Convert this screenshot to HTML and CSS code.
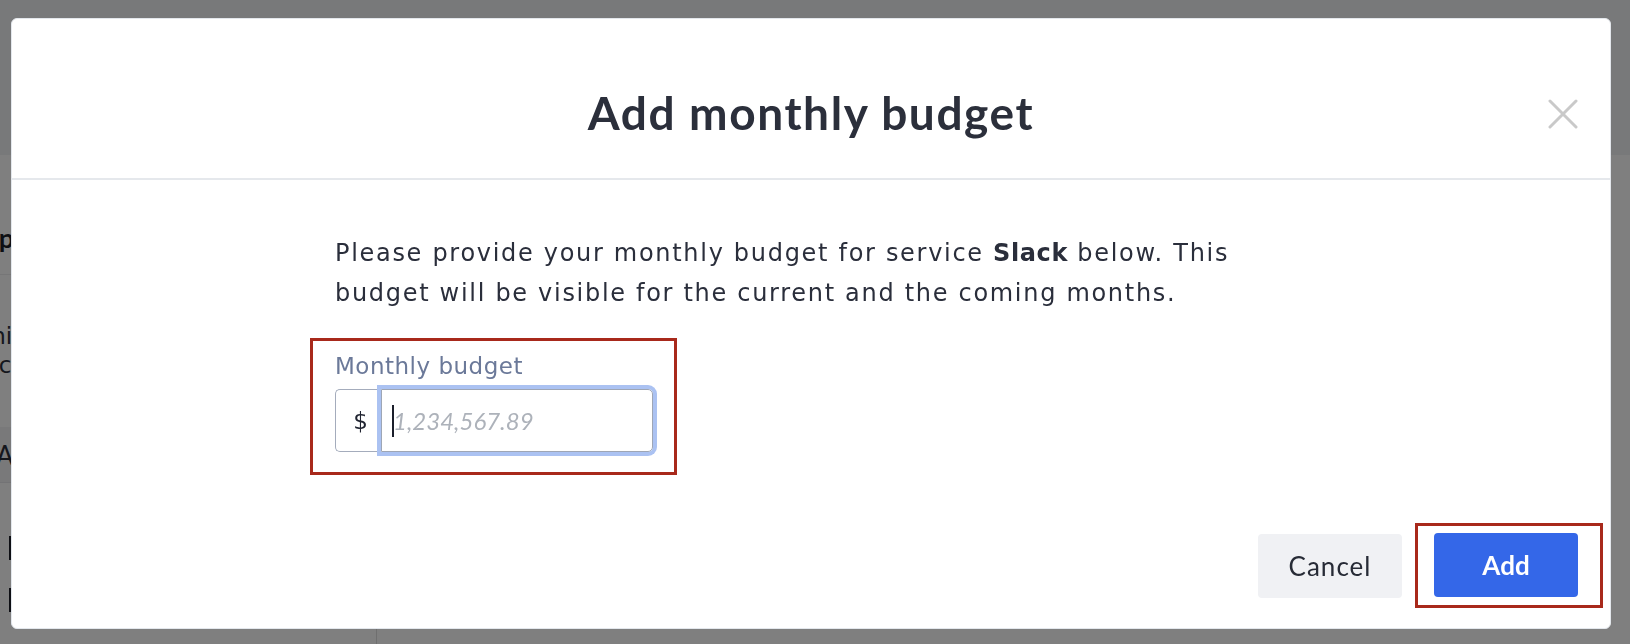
FILE: index.html
```html
<!DOCTYPE html>
<html lang="en">
<head>
<meta charset="utf-8">
<title>Add monthly budget</title>
<link rel="stylesheet" href="styles.css">
</head>
<body>
<div class="app">
  <header class="app-header"></header>
  <div class="app-main">
    <aside class="side">
      <div class="side-head"><span class="side-title">Ap</span></div>
      <div class="side-text">
        <span class="side-line side-line-1">Mini</span>
        <span class="side-line side-line-2">Arc</span>
      </div>
      <div class="side-row">A</div>
      <div class="side-list">
        <span class="side-bar"></span>
        <span class="side-bar"></span>
      </div>
    </aside>
    <main class="content"></main>
  </div>
</div>

<div class="overlay">
  <section class="modal" role="dialog" aria-labelledby="modal-title">
    <header class="modal-header">
      <span class="spacer"></span>
      <h1 class="modal-title" id="modal-title">Add monthly budget</h1>
      <button class="close-btn" type="button" aria-label="Close">
        <svg width="30" height="30" viewBox="0 0 30 30" aria-hidden="true">
          <path d="M2 2 L28 28 M28 2 L2 28" stroke="#c9c9c9" stroke-width="3" stroke-linecap="round" fill="none"/>
        </svg>
      </button>
    </header>
    <div class="modal-body">
      <div class="content-col">
        <p class="lead">Please provide your monthly budget for service <strong>Slack</strong> below. This budget will be visible for the current and the coming months.</p>
        <div class="form-group">
          <label class="field-label" for="budget">Monthly budget</label>
          <div class="input-group">
            <span class="addon">$</span>
            <div class="field" id="budget">
              <span class="caret"></span>
              <span class="placeholder">1,234,567.89</span>
            </div>
          </div>
        </div>
      </div>
    </div>
    <footer class="modal-footer">
      <button class="btn btn-cancel" type="button">Cancel</button>
      <div class="highlight">
        <button class="btn btn-add" type="button">Add</button>
      </div>
    </footer>
  </section>
</div>
</body>
</html>
```

FILE: styles.css
```css
* { box-sizing: border-box; }

html, body {
  margin: 0;
  padding: 0;
}

body {
  width: 1630px;
  height: 644px;
  overflow: hidden;
  font-family: "Lato", "Liberation Sans", sans-serif;
  background: #ffffff;
  color: #2b2f3b;
}

/* underlying application (dimmed) */
.app {
  display: flex;
  flex-direction: column;
  height: 644px;
}

.app-header {
  height: 155px;
  background: #f1f2f5;
  flex: none;
}

.app-main {
  flex: 1;
  display: flex;
}

.side {
  width: 377px;
  border-right: 1px solid #dedede;
  display: flex;
  flex-direction: column;
}

.side-head {
  height: 120px;
  padding-top: 68px;
  border-bottom: 1px solid #ececee;
}

.side-title {
  display: block;
  margin-left: -20px;
  font-size: 27px;
  font-weight: 700;
  line-height: 30px;
  color: #1c1f29;
}

.side-text {
  padding-top: 47px;
  font-family: "DejaVu Sans", sans-serif;
  font-size: 23px;
  line-height: 29px;
  color: #2b2f3b;
  height: 152px;
  display: flex;
  flex-direction: column;
}

.side-line-1 { margin-left: -35px; }
.side-line-2 { margin-left: -26px; }

.side-row {
  height: 56px;
  background: #f2f3f5;
  margin-left: -4px;
  font-size: 26px;
  line-height: 56px;
  color: #2b2f3b;
  border-bottom: 1px solid #e6e7ea;
  margin-bottom: 39px;
}

.side-list {
  display: flex;
  flex-direction: column;
  gap: 28px;
  padding-top: 14px;
  padding-left: 9px;
}

.side-bar {
  display: block;
  width: 3px;
  height: 24px;
  background: #1c1f29;
}

.content {
  flex: 1;
}

/* overlay + modal */
.overlay {
  position: fixed;
  inset: 0;
  background: rgba(0, 0, 0, 0.5);
  display: flex;
  padding: 18px 19px 15px 11px;
}

.modal {
  flex: 1;
  background: #ffffff;
  border: 1px solid #e3e7ec;
  border-radius: 6px;
  display: flex;
  flex-direction: column;
  overflow: hidden;
}

.modal-header {
  display: grid;
  grid-template-columns: 1fr auto 1fr;
  align-items: center;
  padding: 71px 0 42px;
  border-bottom: 2px solid #e5e8ec;
}

.modal-title {
  margin: 0;
  font-size: 46px;
  line-height: 46px;
  font-weight: 700;
  letter-spacing: 1.6px;
  color: #2b2f3b;
  text-align: center;
}

.close-btn {
  justify-self: end;
  margin: 2px 32px 0 0;
  padding: 0;
  border: none;
  background: transparent;
  width: 30px;
  height: 30px;
  display: flex;
}

.modal-body {
  flex: 1;
  padding-top: 54px;
}

.content-col {
  width: 952px;
  margin: 0 auto;
  display: flex;
  flex-direction: column;
  align-items: flex-start;
}

.lead {
  margin: 0;
  font-family: "DejaVu Sans", "Lato", sans-serif;
  font-size: 24px;
  line-height: 39.5px;
  letter-spacing: 1.7px;
  color: #2a2e3b;
}

.lead strong {
  font-weight: 700;
  letter-spacing: 0.6px;
}

.form-group {
  margin: 25px 0 0 -25px;
  padding: 11px 21px 20px 22px;
  border: 3px solid #a8291b;
  display: flex;
  flex-direction: column;
}

.field-label {
  display: block;
  font-family: "DejaVu Sans", "Lato", sans-serif;
  font-size: 23px;
  line-height: 28px;
  letter-spacing: 0.5px;
  color: #6b7999;
  margin-bottom: 9px;
}

.input-group {
  display: flex;
  height: 63px;
}

.addon {
  width: 46px;
  border: 1px solid #a4acbc;
  border-right: none;
  border-radius: 5px 0 0 5px;
  display: flex;
  align-items: center;
  justify-content: center;
  padding-left: 4px;
  font-family: "DejaVu Sans", sans-serif;
  font-size: 23px;
  color: #1f2330;
}

.field {
  width: 272px;
  border: 1px solid #9ea6b5;
  border-radius: 0 5px 5px 0;
  box-shadow: 0 0 0 4px #abc2f2;
  display: flex;
  align-items: center;
  padding-left: 10px;
}

.caret {
  width: 2px;
  height: 32px;
  background: #1b1f2b;
  flex: none;
}

.placeholder {
  margin-left: -1px;
  font-size: 24px;
  font-style: italic;
  color: #adb2ba;
}

.modal-footer {
  display: flex;
  justify-content: flex-end;
  align-items: center;
  gap: 13px;
  padding: 0 7px 20px 0;
}

.highlight {
  border: 3px solid #a8291b;
  padding: 7px 22px 8px 16px;
  display: flex;
}

.btn {
  width: 144px;
  height: 64px;
  border: none;
  border-radius: 4px;
  font-family: "Lato", "Liberation Sans", sans-serif;
  font-size: 26px;
  padding: 0;
}

.btn-cancel {
  background: #f0f1f4;
  color: #272b36;
  letter-spacing: 1px;
}

.btn-add {
  background: #3467e8;
  color: #ffffff;
  font-weight: 700;
}
```
